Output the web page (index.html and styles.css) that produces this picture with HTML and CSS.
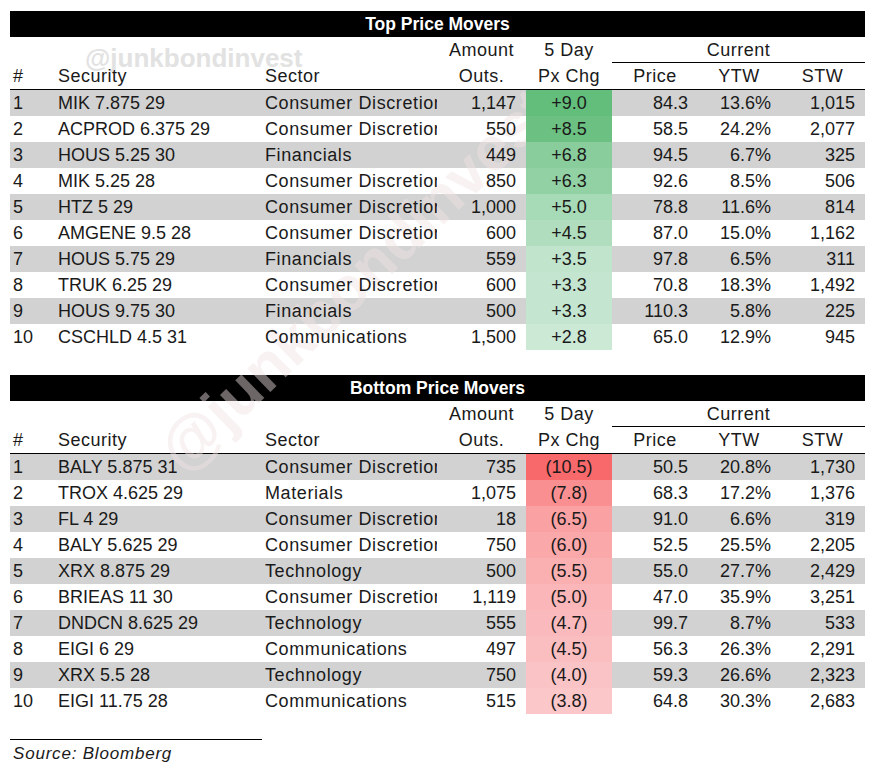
FILE: index.html
```html
<!DOCTYPE html>
<html>
<head>
<meta charset="utf-8">
<link rel="stylesheet" href="styles.css">
</head>
<body>
<div class="page">
  <div class="wm-top">@junkbondinvest</div>
  <div class="wm-diag">@junkbondinvest</div>

  <section class="movers">
    <div class="title-bar">Top Price Movers</div>
    <div class="row head1">
      <span class="cell span3"></span>
      <span class="cell ctr">Amount</span>
      <span class="cell ctr">5 Day</span>
      <span class="cell ctr span-cur">Current</span>
    </div>
    <div class="row head2">
      <span class="cell lft">#</span>
      <span class="cell lft">Security</span>
      <span class="cell lft">Sector</span>
      <span class="cell ctr">Outs.</span>
      <span class="cell ctr">Px Chg</span>
      <span class="cell ctr">Price</span>
      <span class="cell ctr">YTW</span>
      <span class="cell ctr">STW</span>
    </div>
    <div class="row odd"><span class="cell lft">1</span><span class="cell lft">MIK 7.875 29</span><span class="cell lft sector">Consumer Discretionary</span><span class="cell num">1,147</span><span class="cell chg g1">+9.0</span><span class="cell num">84.3</span><span class="cell num ytw">13.6%</span><span class="cell num">1,015</span></div>
    <div class="row"><span class="cell lft">2</span><span class="cell lft">ACPROD 6.375 29</span><span class="cell lft sector">Consumer Discretionary</span><span class="cell num">550</span><span class="cell chg g2">+8.5</span><span class="cell num">58.5</span><span class="cell num ytw">24.2%</span><span class="cell num">2,077</span></div>
    <div class="row odd"><span class="cell lft">3</span><span class="cell lft">HOUS 5.25 30</span><span class="cell lft sector">Financials</span><span class="cell num">449</span><span class="cell chg g3">+6.8</span><span class="cell num">94.5</span><span class="cell num ytw">6.7%</span><span class="cell num">325</span></div>
    <div class="row"><span class="cell lft">4</span><span class="cell lft">MIK 5.25 28</span><span class="cell lft sector">Consumer Discretionary</span><span class="cell num">850</span><span class="cell chg g4">+6.3</span><span class="cell num">92.6</span><span class="cell num ytw">8.5%</span><span class="cell num">506</span></div>
    <div class="row odd"><span class="cell lft">5</span><span class="cell lft">HTZ 5 29</span><span class="cell lft sector">Consumer Discretionary</span><span class="cell num">1,000</span><span class="cell chg g5">+5.0</span><span class="cell num">78.8</span><span class="cell num ytw">11.6%</span><span class="cell num">814</span></div>
    <div class="row"><span class="cell lft">6</span><span class="cell lft">AMGENE 9.5 28</span><span class="cell lft sector">Consumer Discretionary</span><span class="cell num">600</span><span class="cell chg g6">+4.5</span><span class="cell num">87.0</span><span class="cell num ytw">15.0%</span><span class="cell num">1,162</span></div>
    <div class="row odd"><span class="cell lft">7</span><span class="cell lft">HOUS 5.75 29</span><span class="cell lft sector">Financials</span><span class="cell num">559</span><span class="cell chg g7">+3.5</span><span class="cell num">97.8</span><span class="cell num ytw">6.5%</span><span class="cell num">311</span></div>
    <div class="row"><span class="cell lft">8</span><span class="cell lft">TRUK 6.25 29</span><span class="cell lft sector">Consumer Discretionary</span><span class="cell num">600</span><span class="cell chg g8">+3.3</span><span class="cell num">70.8</span><span class="cell num ytw">18.3%</span><span class="cell num">1,492</span></div>
    <div class="row odd"><span class="cell lft">9</span><span class="cell lft">HOUS 9.75 30</span><span class="cell lft sector">Financials</span><span class="cell num">500</span><span class="cell chg g9">+3.3</span><span class="cell num">110.3</span><span class="cell num ytw">5.8%</span><span class="cell num">225</span></div>
    <div class="row"><span class="cell lft">10</span><span class="cell lft">CSCHLD 4.5 31</span><span class="cell lft sector">Communications</span><span class="cell num">1,500</span><span class="cell chg g10">+2.8</span><span class="cell num">65.0</span><span class="cell num ytw">12.9%</span><span class="cell num">945</span></div>
  </section>

  <section class="movers bottom">
    <div class="title-bar">Bottom Price Movers</div>
    <div class="row head1">
      <span class="cell span3"></span>
      <span class="cell ctr">Amount</span>
      <span class="cell ctr">5 Day</span>
      <span class="cell ctr span-cur">Current</span>
    </div>
    <div class="row head2">
      <span class="cell lft">#</span>
      <span class="cell lft">Security</span>
      <span class="cell lft">Sector</span>
      <span class="cell ctr">Outs.</span>
      <span class="cell ctr">Px Chg</span>
      <span class="cell ctr">Price</span>
      <span class="cell ctr">YTW</span>
      <span class="cell ctr">STW</span>
    </div>
    <div class="row odd"><span class="cell lft">1</span><span class="cell lft">BALY 5.875 31</span><span class="cell lft sector">Consumer Discretionary</span><span class="cell num">735</span><span class="cell chg r1">(10.5)</span><span class="cell num">50.5</span><span class="cell num ytw">20.8%</span><span class="cell num">1,730</span></div>
    <div class="row"><span class="cell lft">2</span><span class="cell lft">TROX 4.625 29</span><span class="cell lft sector">Materials</span><span class="cell num">1,075</span><span class="cell chg r2">(7.8)</span><span class="cell num">68.3</span><span class="cell num ytw">17.2%</span><span class="cell num">1,376</span></div>
    <div class="row odd"><span class="cell lft">3</span><span class="cell lft">FL 4 29</span><span class="cell lft sector">Consumer Discretionary</span><span class="cell num">18</span><span class="cell chg r3">(6.5)</span><span class="cell num">91.0</span><span class="cell num ytw">6.6%</span><span class="cell num">319</span></div>
    <div class="row"><span class="cell lft">4</span><span class="cell lft">BALY 5.625 29</span><span class="cell lft sector">Consumer Discretionary</span><span class="cell num">750</span><span class="cell chg r4">(6.0)</span><span class="cell num">52.5</span><span class="cell num ytw">25.5%</span><span class="cell num">2,205</span></div>
    <div class="row odd"><span class="cell lft">5</span><span class="cell lft">XRX 8.875 29</span><span class="cell lft sector">Technology</span><span class="cell num">500</span><span class="cell chg r5">(5.5)</span><span class="cell num">55.0</span><span class="cell num ytw">27.7%</span><span class="cell num">2,429</span></div>
    <div class="row"><span class="cell lft">6</span><span class="cell lft">BRIEAS 11 30</span><span class="cell lft sector">Consumer Discretionary</span><span class="cell num">1,119</span><span class="cell chg r6">(5.0)</span><span class="cell num">47.0</span><span class="cell num ytw">35.9%</span><span class="cell num">3,251</span></div>
    <div class="row odd"><span class="cell lft">7</span><span class="cell lft">DNDCN 8.625 29</span><span class="cell lft sector">Technology</span><span class="cell num">555</span><span class="cell chg r7">(4.7)</span><span class="cell num">99.7</span><span class="cell num ytw">8.7%</span><span class="cell num">533</span></div>
    <div class="row"><span class="cell lft">8</span><span class="cell lft">EIGI 6 29</span><span class="cell lft sector">Communications</span><span class="cell num">497</span><span class="cell chg r8">(4.5)</span><span class="cell num">56.3</span><span class="cell num ytw">26.3%</span><span class="cell num">2,291</span></div>
    <div class="row odd"><span class="cell lft">9</span><span class="cell lft">XRX 5.5 28</span><span class="cell lft sector">Technology</span><span class="cell num">750</span><span class="cell chg r9">(4.0)</span><span class="cell num">59.3</span><span class="cell num ytw">26.6%</span><span class="cell num">2,323</span></div>
    <div class="row"><span class="cell lft">10</span><span class="cell lft">EIGI 11.75 28</span><span class="cell lft sector">Communications</span><span class="cell num">515</span><span class="cell chg r10">(3.8)</span><span class="cell num">64.8</span><span class="cell num ytw">30.3%</span><span class="cell num">2,683</span></div>
  </section>

  <div class="source">Source: Bloomberg</div>
</div>
</body>
</html>
```

FILE: styles.css
```css
html, body {
  margin: 0;
  padding: 0;
  background: #ffffff;
}

.page {
  position: relative;
  width: 855px;
  padding: 11px 9px 0 10px;
  font-family: "Liberation Sans", Arial, sans-serif;
  font-size: 18px;
  color: #1a1a1a;
}

.movers.bottom {
  margin-top: 25px;
}

.title-bar {
  height: 26px;
  line-height: 26px;
  background: #000000;
  color: #ffffff;
  font-weight: bold;
  font-size: 17.5px;
  text-align: center;
}

.row {
  display: grid;
  grid-template-columns: 45px 207px 175px 89px 86px 86px 82px 85px;
  height: 26px;
  box-sizing: border-box;
}

.row.odd {
  background: #d2d2d2;
}

.row.head1 .cell,
.row.head2 .cell {
  letter-spacing: 0.5px;
}

.row.head2 {
  height: 27px;
  border-bottom: 1px solid #000000;
}

.cell {
  position: relative;
  z-index: 2;
  display: block;
  box-sizing: border-box;
  height: 26px;
  padding-top: 1px;
  line-height: 25px;
  white-space: nowrap;
  overflow: hidden;
}

.lft {
  padding-left: 3px;
  text-align: left;
}

.sector {
  letter-spacing: 0.6px;
}

.ctr {
  text-align: center;
}

.num {
  text-align: right;
  padding-right: 10px;
}

.num.ytw {
  padding-right: 9px;
}

.chg {
  text-align: center;
}

.span3 {
  grid-column: span 3;
}

.span-cur {
  grid-column: span 3;
  border-bottom: 1px solid #000000;
}

.g1 { background: #63be7b; }
.g2 { background: #6cc182; }
.g3 { background: #88cd9b; }
.g4 { background: #91d1a3; }
.g5 { background: #a7dab6; }
.g6 { background: #b0ddbd; }
.g7 { background: #c0e4cc; }
.g8 { background: #c4e5cf; }
.g9 { background: #c4e5cf; }
.g10 { background: #cce9d6; }

.r1 { background: #f8696b; }
.r2 { background: #f98f91; }
.r3 { background: #faa1a3; }
.r4 { background: #faa8aa; }
.r5 { background: #faafb1; }
.r6 { background: #fab6b8; }
.r7 { background: #fababd; }
.r8 { background: #fabdc0; }
.r9 { background: #fac4c7; }
.r10 { background: #fbc7c9; }

.source {
  width: 252px;
  margin-top: 25px;
  border-top: 1px solid #000000;
  padding: 3px 0 0 3px;
  box-sizing: border-box;
  font-style: italic;
  font-size: 17px;
  letter-spacing: 0.8px;
  line-height: 22px;
  color: #1a1a1a;
}

.wm-top {
  position: absolute;
  z-index: 1;
  left: 85px;
  top: 45px;
  font-family: "Liberation Sans", Arial, sans-serif;
  font-weight: bold;
  font-size: 26px;
  line-height: 26px;
  color: #e2e2e2;
  white-space: nowrap;
}

.wm-diag {
  position: absolute;
  z-index: 1;
  left: 356px;
  top: 280px;
  transform: translate(-50%, -50%) rotate(-44deg);
  font-family: "Liberation Sans", Arial, sans-serif;
  font-weight: bold;
  font-size: 62px;
  line-height: 62px;
  color: rgba(240, 226, 226, 0.45);
  white-space: nowrap;
  pointer-events: none;
}
```
